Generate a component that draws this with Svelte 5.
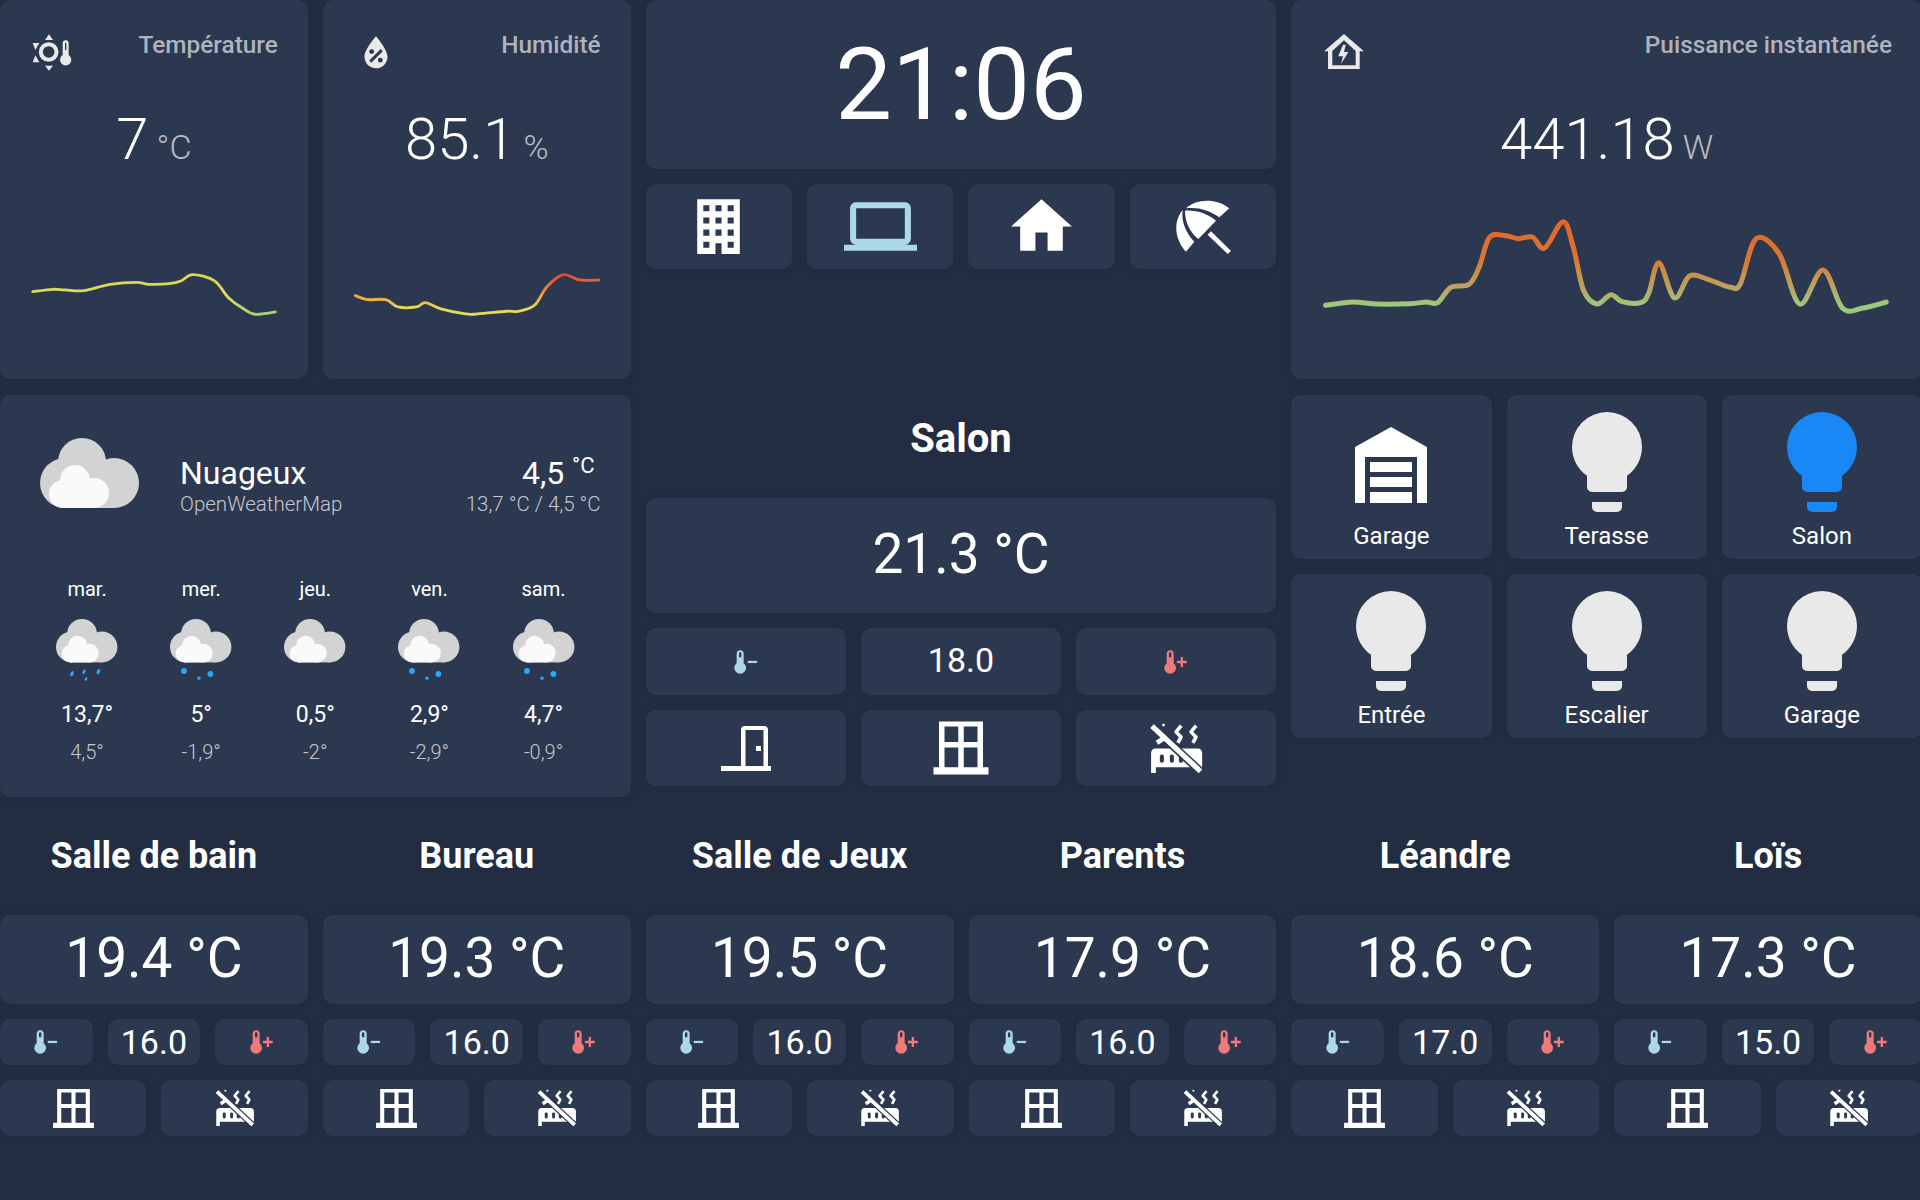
<script>
  function smooth(z, ox) {
    const p = z.map(([x, y]) => [x / 2.45 - ox, y / 3]);
    let d = `M${p[0][0].toFixed(1)} ${p[0][1].toFixed(1)}`;
    for (let i = 0; i < p.length - 1; i++) {
      const a = p[Math.max(i - 1, 0)], b = p[i], c = p[i + 1], e = p[Math.min(i + 2, p.length - 1)];
      const t = 6;
      d += `C${(b[0] + (c[0] - a[0]) / t).toFixed(1)} ${(b[1] + (c[1] - a[1]) / t).toFixed(1)} ${(c[0] - (e[0] - b[0]) / t).toFixed(1)} ${(c[1] - (e[1] - b[1]) / t).toFixed(1)} ${c[0].toFixed(1)} ${c[1].toFixed(1)}`;
    }
    return d;
  }
  const tempLine = smooth([[80,875],[130,868],[160,870],[205,872],[270,853],[335,847],[365,853],[415,851],[445,842],[472,824],[525,842],[560,893],[595,925],[625,943],[675,936]], 0);
  const humLine = smooth([[870,887],[900,899],[945,899],[975,921],[1020,921],[1042,908],[1080,927],[1140,942],[1170,942],[1240,934],[1270,934],[1310,915],[1340,860],[1380,824],[1420,840],[1467,840]], 322.83);
  const powLine = smooth([[113,916],[180,906],[240,912],[320,911],[360,906],[388,908],[420,862],[465,853],[490,800],[515,712],[555,707],[585,716],[620,711],[650,744],[695,665],[720,740],[745,870],[778,912],[812,884],[840,905],[885,908],[905,880],[930,788],[968,893],[1005,828],[1050,838],[1105,862],[1130,850],[1168,716],[1225,762],[1275,912],[1332,810],[1380,925],[1430,924],[1487,906]], 11.67);

  const forecast = [
    { d: 'mar.', hi: '13,7°', lo: '4,5°', rain: 'slant' },
    { d: 'mer.', hi: '5°', lo: '-1,9°', rain: 'dots' },
    { d: 'jeu.', hi: '0,5°', lo: '-2°', rain: '' },
    { d: 'ven.', hi: '2,9°', lo: '-2,9°', rain: 'dots' },
    { d: 'sam.', hi: '4,7°', lo: '-0,9°', rain: 'dots' }
  ];
  const rooms = [
    { n: 'Salle de bain', t: '19.4', s: '16.0' },
    { n: 'Bureau', t: '19.3', s: '16.0' },
    { n: 'Salle de Jeux', t: '19.5', s: '16.0' },
    { n: 'Parents', t: '17.9', s: '16.0' },
    { n: 'Léandre', t: '18.6', s: '17.0' },
    { n: 'Loïs', t: '17.3', s: '15.0' }
  ];
  const lights = [
    { n: 'Terasse' }, { n: 'Salon', on: true }, { n: 'Entrée' }, { n: 'Escalier' }, { n: 'Garage' }
  ];
</script>

{#snippet cloud()}
  <g fill="#d3d3d3">
    <circle cx="42" cy="24" r="24" /><circle cx="25" cy="45" r="25" /><circle cx="74" cy="45" r="25" /><rect x="25" y="30" width="49" height="40" />
  </g>
  <g fill="#fafafa">
    <circle cx="35" cy="42" r="15" /><circle cx="23" cy="56" r="14" /><circle cx="54" cy="55" r="15" /><rect x="23" y="45" width="31" height="25" />
  </g>
{/snippet}

{#snippet thermoMinus()}
  <svg class="thermo cold" viewBox="0 0 24 24"><path fill-rule="evenodd" d="M10 13V5A3 3 0 0 0 4 5V13A5 5 0 1 0 10 13ZM7 3.6A1 1 0 0 1 8 4.6V8H6V4.6A1 1 0 0 1 7 3.6Z" /><path d="M13.5 11H21.5V12.9H13.5Z" /></svg>
{/snippet}
{#snippet thermoPlus()}
  <svg class="thermo hot" viewBox="0 0 24 24"><path fill-rule="evenodd" d="M10 13V5A3 3 0 0 0 4 5V13A5 5 0 1 0 10 13ZM7 3.6A1 1 0 0 1 8 4.6V8H6V4.6A1 1 0 0 1 7 3.6Z" /><path d="M16 7.8H18V11H21.2V13H18V16.2H16V13H12.8V11H16Z" /></svg>
{/snippet}
{#snippet windowIcon()}
  <svg class="win" viewBox="0 0 24 24"><path fill="#fff" fill-rule="evenodd" d="M4 2.4H20V19H22V21.6H2V19H4ZM6 4.2V9.8H11V4.2ZM13 4.2V9.8H18V4.2ZM6 11.8V19H11V11.8ZM13 11.8V19H18V11.8Z" /></svg>
{/snippet}
{#snippet radiatorOff()}
  <svg class="rad" viewBox="0 0 24 24">
    <path fill="#fff" d="M1.3 14Q1.3 12 3.3 12H20.8Q22.8 12 22.8 14V22.3H20.8V19.9H3.3V22.3H1.3Z" />
    <g fill="#2c3850"><rect x="5" y="14.5" width="1.7" height="3.5" rx=".8" /><rect x="9.2" y="14.5" width="1.7" height="3.5" rx=".8" /><rect x="13" y="14.5" width="1.8" height="3.5" rx=".8" /></g>
    <path fill="none" stroke="#fff" stroke-width="1.5" stroke-linejoin="round" d="M14 2.4L11.8 5L13.9 7.2L12.6 9.6M20.3 2.4L18.1 5L20.2 7.2L18.9 9.6" />
    <path stroke="#2c3850" stroke-width="3.5" d="M1 2L24 23.4" fill="none" />
    <path stroke="#fff" stroke-width="2.2" d="M1.7 2.6L22.1 21.6" fill="none" />
    <path stroke="#fff" stroke-width="2" d="M3.8 9.6L7.4 7.2" fill="none" />
    <rect x="6" y="1.6" width="1" height="1" fill="#fff" />
  </svg>
{/snippet}

{#snippet room(r, big)}
  <section class="room" class:big>
    <h2>{r.n}</h2>
    <div class="card temp">{r.t} °C</div>
    <div class="controls">
      <div class="card cell">{@render thermoMinus()}</div>
      <div class="card cell setpoint">{r.s}</div>
      <div class="card cell">{@render thermoPlus()}</div>
    </div>
    <div class="actions">
      {#if big}
        <div class="card cell">
          <svg class="door" viewBox="0 0 50 45"><path fill="#fff" fill-rule="evenodd" d="M20 40V4Q20 0 24 0H43Q47 0 47 4V40H50V45H0V40ZM24.5 4V40H42.5V4ZM35 20H40V25H35Z" /></svg>
        </div>
      {/if}
      <div class="card cell">{@render windowIcon()}</div>
      <div class="card cell">{@render radiatorOff()}</div>
    </div>
  </section>
{/snippet}

<div class="page">
  <div class="main">
    <div class="pair">
      <article class="card sensor">
        <header>
          <svg class="head-icon" viewBox="0 0 46 46">
            <g transform="scale(.3333)" fill="#e9e9e9">
              <path d="M57 13L69 30H45ZM57 122L45 107H69ZM8 39H28L16 60ZM8 97H28L16 76Z" />
              <circle cx="56" cy="66" r="23.5" fill="none" stroke="#e9e9e9" stroke-width="12" />
              <path fill-rule="evenodd" d="M98 75V40A9 9 0 0 1 116 40V75A17 17 0 1 1 98 75ZM105 40V60H109V40A2 2 0 0 0 105 40Z" />
            </g>
          </svg>
          <span>Température</span>
        </header>
        <div class="value"><b>7</b><i>°C</i></div>
        <svg class="chart" viewBox="0 250 308 129">
          <defs><linearGradient id="g1" gradientUnits="userSpaceOnUse" x1="0" x2="0" y1="270" y2="316"><stop offset="0" stop-color="#e3d352" /><stop offset=".6" stop-color="#d9dc60" /><stop offset="1" stop-color="#9fd46f" /></linearGradient></defs>
          <path d={tempLine} fill="none" stroke="url(#g1)" stroke-width="2.8" stroke-linecap="round" />
        </svg>
      </article>
      <article class="card sensor">
        <header>
          <svg class="head-icon" viewBox="0 0 24 24"><path fill="#e9e9e9" d="M12,3.25C12,3.25 6,10 6,14C6,17.32 8.69,20 12,20A6,6 0 0,0 18,14C18,10 12,3.25 12,3.25M14.47,9.97L15.53,11.03L9.53,17.03L8.47,15.97M9.75,10A1.25,1.25 0 0,1 11,11.25A1.25,1.25 0 0,1 9.75,12.5A1.25,1.25 0 0,1 8.5,11.25A1.25,1.25 0 0,1 9.75,10M14.25,14.5A1.25,1.25 0 0,1 15.5,15.75A1.25,1.25 0 0,1 14.25,17A1.25,1.25 0 0,1 13,15.75A1.25,1.25 0 0,1 14.25,14.5Z" /></svg>
          <span>Humidité</span>
        </header>
        <div class="value"><b>85.1</b><i>%</i></div>
        <svg class="chart" viewBox="0 250 308 129">
          <defs><linearGradient id="g2" gradientUnits="userSpaceOnUse" x1="0" x2="0" y1="274" y2="316"><stop offset="0" stop-color="#e5432e" /><stop offset=".45" stop-color="#f0973c" /><stop offset=".8" stop-color="#e7d755" /><stop offset="1" stop-color="#e3dd62" /></linearGradient></defs>
          <path d={humLine} fill="none" stroke="url(#g2)" stroke-width="2.8" stroke-linecap="round" />
        </svg>
      </article>
    </div>

    <div class="clock-col">
      <div class="card clock">21:06</div>
      <div class="modes">
        <div class="card cell">
          <svg class="mode" viewBox="0 0 24 24"><path fill="#fff" d="M5,3V21H11V17.5H13V21H19V3H5M7,5H9V7H7V5M11,5H13V7H11V5M15,5H17V7H15V5M7,9H9V11H7V9M11,9H13V11H11V9M15,9H17V11H15V9M7,13H9V15H7V13M11,13H13V15H11V13M15,13H17V15H15V13M7,17H9V19H7V17M15,17H17V19H15V17Z" /></svg>
        </div>
        <div class="card cell">
          <svg class="mode" viewBox="0 0 24 24"><path fill="#add8e6" d="M4,6H20V16H4M20,18A2,2 0 0,0 22,16V6C22,4.89 21.1,4 20,4H4C2.89,4 2,4.89 2,6V16A2,2 0 0,0 4,18H0V20H24V18H20Z" /></svg>
        </div>
        <div class="card cell">
          <svg class="mode" viewBox="0 0 24 24"><path fill="#fff" d="M10,20V14H14V20H19V12H22L12,3L2,12H5V20H10Z" /></svg>
        </div>
        <div class="card cell">
          <svg class="mode" viewBox="1338 0 219 219"><path fill="#fff" d="M1525,55L1495,82C1465,60 1430,50 1395,55C1420,30 1480,20 1525,55ZM1392,62C1430,60 1460,72 1485,92L1432,147C1405,125 1392,95 1392,62ZM1385,60C1380,95 1395,130 1420,155L1395,185C1362,150 1355,95 1385,60ZM1470,124L1530,183L1520,192L1460,134Z" /></svg>
        </div>
      </div>
    </div>

    <article class="card sensor">
      <header>
        <svg class="head-icon" viewBox="0 0 24 24"><path fill="#e9e9e9" fill-rule="evenodd" d="M12 2.1L22.4 11.1H20.2V20.4H3.65V11.1H1.6ZM12 5.4L18.1 10.9V18.4H5.9V10.9ZM11.5 7.7L9 13.7H11.5L10.4 17.7L14.3 11.5H12L12.9 7.7Z" /></svg>
        <span>Puissance instantanée</span>
      </header>
      <div class="value"><b>441.18</b><i>W</i></div>
      <svg class="chart" viewBox="0 190 630.67 189">
        <defs><linearGradient id="g3" gradientUnits="userSpaceOnUse" x1="0" x2="0" y1="225" y2="305"><stop offset="0" stop-color="#e4662a" /><stop offset=".4" stop-color="#db7532" /><stop offset=".8" stop-color="#b9a563" /><stop offset="1" stop-color="#9cc97c" /></linearGradient></defs>
        <path d={powLine} fill="none" stroke="url(#g3)" stroke-width="5" stroke-linecap="round" stroke-linejoin="round" />
      </svg>
    </article>

    <article class="card weather">
      <div class="now">
        <svg class="cloud-big" viewBox="0 0 99 70">{@render cloud()}</svg>
        <div class="now-name"><strong>Nuageux</strong><small>OpenWeatherMap</small></div>
        <div class="now-temp"><strong>4,5 <sup>°C</sup></strong><small>13,7 °C / 4,5 °C</small></div>
      </div>
      <div class="days">
        {#each forecast as f}
          <div class="day">
            <span class="dname">{f.d}</span>
            <svg class="cloud-small" viewBox="0 0 62 62">
              <g transform="scale(.62)">{@render cloud()}</g>
              {#if f.rain === 'slant'}
                <g fill="#2aa8f8">
                  <ellipse cx="16" cy="54.7" rx="1.6" ry="2.7" transform="rotate(25 16 54.7)" />
                  <ellipse cx="28" cy="52.7" rx="1.4" ry="2.4" transform="rotate(25 28 52.7)" />
                  <ellipse cx="42.4" cy="52.7" rx="1.6" ry="2.7" transform="rotate(25 42.4 52.7)" />
                  <ellipse cx="30" cy="60" rx="1.1" ry="1.9" transform="rotate(25 30 60)" />
                </g>
              {:else if f.rain === 'dots'}
                <g fill="#2aa8f8"><circle cx="14" cy="52" r="2.9" /><circle cx="40.4" cy="55" r="2.9" /><circle cx="29" cy="59.3" r="1.7" /></g>
              {/if}
            </svg>
            <span class="hi">{f.hi}</span>
            <span class="lo">{f.lo}</span>
          </div>
        {/each}
      </div>
    </article>

    {@render room({ n: 'Salon', t: '21.3', s: '18.0' }, true)}

    <div class="lights">
      <div class="card light">
        <svg class="bulb" viewBox="0 0 120 120"><path fill="#fff" fill-rule="evenodd" d="M60 25L96 45V101H24V45ZM34 55V101H86V55ZM39 60H81V70H39ZM39 75H81V85H39ZM39 90H81V101H39Z" /></svg>
        <span>Garage</span>
      </div>
      {#each lights as l}
        <div class="card light">
          <svg class="bulb" viewBox="0 0 24 24"><path fill={l.on ? '#1a87f7' : '#e9e9e9'} d="M12,2A7,7 0 0,0 5,9C5,11.38 6.19,13.47 8,14.74V17A1,1 0 0,0 9,18H15A1,1 0 0,0 16,17V14.74C17.81,13.47 19,11.38 19,9A7,7 0 0,0 12,2M9,21A1,1 0 0,0 10,22H14A1,1 0 0,0 15,21V20H9V21Z" /></svg>
          <span>{l.n}</span>
        </div>
      {/each}
    </div>
  </div>

  <div class="rooms">
    {#each rooms as r}
      {@render room(r, false)}
    {/each}
  </div>
</div>

<style>
  :global(body) { margin: 0; background: #222d42; overflow: hidden; }
  .page { width: 1922px; height: 1200px; background: #222d42; color: #fff; font-family: Roboto, "Liberation Sans", sans-serif; overflow: hidden; }
  .card { background: #2c3850; border-radius: 10px; box-shadow: 0 0 8px rgba(0, 0, 0, .09); box-sizing: border-box; }
  .main { display: grid; grid-template-columns: repeat(3, 1fr); grid-template-rows: 379px 402px; gap: 16px 15px; }
  .pair { display: grid; grid-template-columns: 1fr 1fr; gap: 15px; }

  .sensor { display: flex; flex-direction: column; min-width: 0; }
  .sensor header { display: flex; justify-content: space-between; padding: 30px 30px 0; }
  .sensor header span { font-size: 24.4px; font-weight: 500; line-height: 28px; margin-top: 1px; color: #aeb3be; }
  .head-icon { width: 46px; height: 46px; display: block; }
  .value { text-align: center; margin-top: 24px; height: 78px; line-height: 78px; white-space: nowrap; }
  .value b { font-size: 58px; font-weight: 300; }
  .value i { font-style: normal; font-size: 34px; font-weight: 300; color: #b8bcc6; margin-left: 8px; }
  .chart { display: block; margin-top: auto; width: 100%; }

  .clock-col { display: flex; flex-direction: column; gap: 15px; }
  .clock { height: 169px; display: flex; align-items: center; justify-content: center; font-size: 101px; line-height: 1; }
  .modes { display: grid; grid-template-columns: repeat(4, 1fr); gap: 15px; height: 85px; }
  .cell { display: flex; align-items: center; justify-content: center; min-width: 0; }
  .mode { width: 73px; height: 73px; display: block; }

  .weather { padding: 30px; display: flex; flex-direction: column; }
  .now { display: flex; align-items: flex-start; height: 96px; margin-top: 5px; }
  .cloud-big { width: 99px; height: 70px; margin: 8px 0 0 10px; flex: none; display: block; }
  .now-name { margin-left: 41px; flex: 1; display: flex; flex-direction: column; padding-top: 24px; }
  .now strong { font-weight: 400; font-size: 32px; line-height: 38px; }
  .now small { font-size: 20.5px; font-weight: 300; color: #c4c7cf; line-height: 24px; margin-top: 0; }
  .now-temp { display: flex; flex-direction: column; align-items: flex-end; padding-top: 24px; }
  .now-temp strong { padding-right: 6px; }
  .now-temp sup { font-size: 22px; line-height: 0; vertical-align: 11px; }
  .days { display: flex; margin-top: 51px; }
  .day { flex: 1; display: flex; flex-direction: column; align-items: center; }
  .dname { font-size: 20px; line-height: 24px; }
  .cloud-small { width: 62px; height: 62px; margin-top: 18px; display: block; }
  .hi { font-size: 23px; line-height: 28px; margin-top: 20px; }
  .lo { font-size: 20px; font-weight: 300; color: #c4c7cf; line-height: 24px; margin-top: 11px; }

  .room { display: flex; flex-direction: column; min-width: 0; }
  .room h2 { margin: 0; height: 103px; box-sizing: border-box; padding-bottom: 15px; display: flex; align-items: center; justify-content: center; font-size: 36px; font-weight: 700; white-space: nowrap; }
  .temp { height: 89px; padding-bottom: 3px; display: flex; align-items: center; justify-content: center; font-size: 55px; line-height: 1; }
  .controls { display: grid; grid-template-columns: repeat(3, 1fr); gap: 15px; margin-top: 15px; height: 46px; }
  .setpoint { font-size: 34px; }
  .actions { display: grid; grid-template-columns: repeat(2, 1fr); gap: 15px; margin-top: 15px; height: 56px; }
  .thermo { width: 28px; height: 28px; display: block; fill: currentColor; }
  .cold { color: #add8e6; }
  .hot { color: #f07a7a; }
  .win { width: 49px; height: 49px; display: block; }
  .rad { width: 42px; height: 42px; display: block; }
  .door { width: 50px; height: 45px; display: block; }
  .big h2 { font-size: 40px; padding-bottom: 17px; }
  .big .temp { height: 115px; }
  .big .setpoint { padding-bottom: 4px; }
  .big .controls { height: 67px; }
  .big .actions { height: 76px; grid-template-columns: repeat(3, 1fr); }
  .big .win { width: 66px; height: 66px; }
  .big .rad { width: 57px; height: 57px; }

  .lights { display: grid; grid-template-columns: repeat(3, 1fr); grid-auto-rows: 164px; gap: 15px; }
  .light { display: flex; flex-direction: column; align-items: center; padding-top: 7px; overflow: hidden; }
  .bulb { width: 120px; height: 120px; display: block; flex: none; }
  .light span { font-size: 24px; line-height: 28px; margin-top: 0; }

  .rooms { display: grid; grid-template-columns: repeat(6, 1fr); gap: 15px; margin-top: 15px; }
</style>
